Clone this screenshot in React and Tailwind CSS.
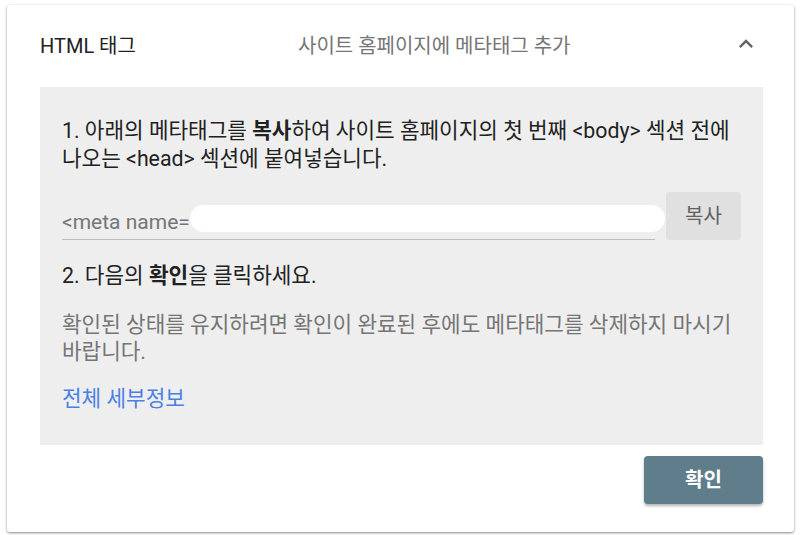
const font = { fontFamily: 'Roboto, "Noto Sans CJK KR", sans-serif' };

const ExpandLess = () => (
   <svg viewBox="0 0 24 24" className="w-7 h-7 fill-[#5f6368]">
      <path d="M12 8l-6 6 1.41 1.41L12 10.83l4.59 4.58L18 14z" />
   </svg>
);

const App = () => {
   return (
      <div className="w-[800px] h-[535px] bg-white pt-[5px] pl-[7px]" style={font}>
         <div className="w-[787px] h-[527px] bg-white rounded-[3px] shadow-[0_1px_3px_rgba(0,0,0,0.35),0_1px_2px_rgba(0,0,0,0.15)] pl-[33px] pr-[31px] flex flex-col">
            <div className="h-[82px] flex items-center">
               <div className="w-[258px] text-[20px] text-[#212121]">HTML 태그</div>
               <div className="flex-1 text-[20px] text-[#757575]">사이트 홈페이지에 메타태그 추가</div>
               <div className="mb-1 mr-[3px]">
                  <ExpandLess />
               </div>
            </div>

            <div className="bg-[#eeeeee] h-[358px] pl-[22px] pr-[10px] pt-[30px]">
               <p className="text-[21.3px] leading-[28px] text-[#212121]">
                  1. 아래의 메타태그를 <b className="font-bold">복사</b>하여 사이트 홈페이지의 첫 번째 &lt;body&gt; 섹션 전에 나오는 &lt;head&gt; 섹션에 붙여넣습니다.
               </p>

               <div className="mt-[19px] flex items-stretch h-[48px]">
                  <div className="relative w-[593px] border-b border-[#bdbdbd] flex items-end pb-[3px]">
                     <span className="text-[21px] leading-[28px] text-[#757575]">&lt;meta name=</span>
                     <div className="absolute left-[128px] right-[-10px] top-[13px] h-[27px] bg-white rounded-full"></div>
                  </div>
                  <button className="ml-[11px] w-[75px] bg-[#e0e0e0] rounded-[3px] text-[20px] text-[#616161]">
                     복사
                  </button>
               </div>

               <p className="mt-[22px] text-[21.3px] leading-[28px] text-[#212121]">
                  2. 다음의 <b className="font-bold">확인</b>을 클릭하세요.
               </p>

               <p className="mt-[21px] text-[21.3px] leading-[27px] text-[#757575]">
                  확인된 상태를 유지하려면 확인이 완료된 후에도 메타태그를 삭제하지 마시기 바랍니다.
               </p>

               <a className="block mt-[20px] text-[21.3px] leading-[28px] text-[#4a80e6]">전체 세부정보</a>
            </div>

            <div className="flex justify-end mt-[11px]">
               <button className="w-[119px] h-[48px] bg-[#607d8b] rounded-[4px] text-white text-[20px] font-bold shadow-[0_2px_3px_rgba(0,0,0,0.3)]">
                  확인
               </button>
            </div>
         </div>
      </div>
   );
};

export default App;
